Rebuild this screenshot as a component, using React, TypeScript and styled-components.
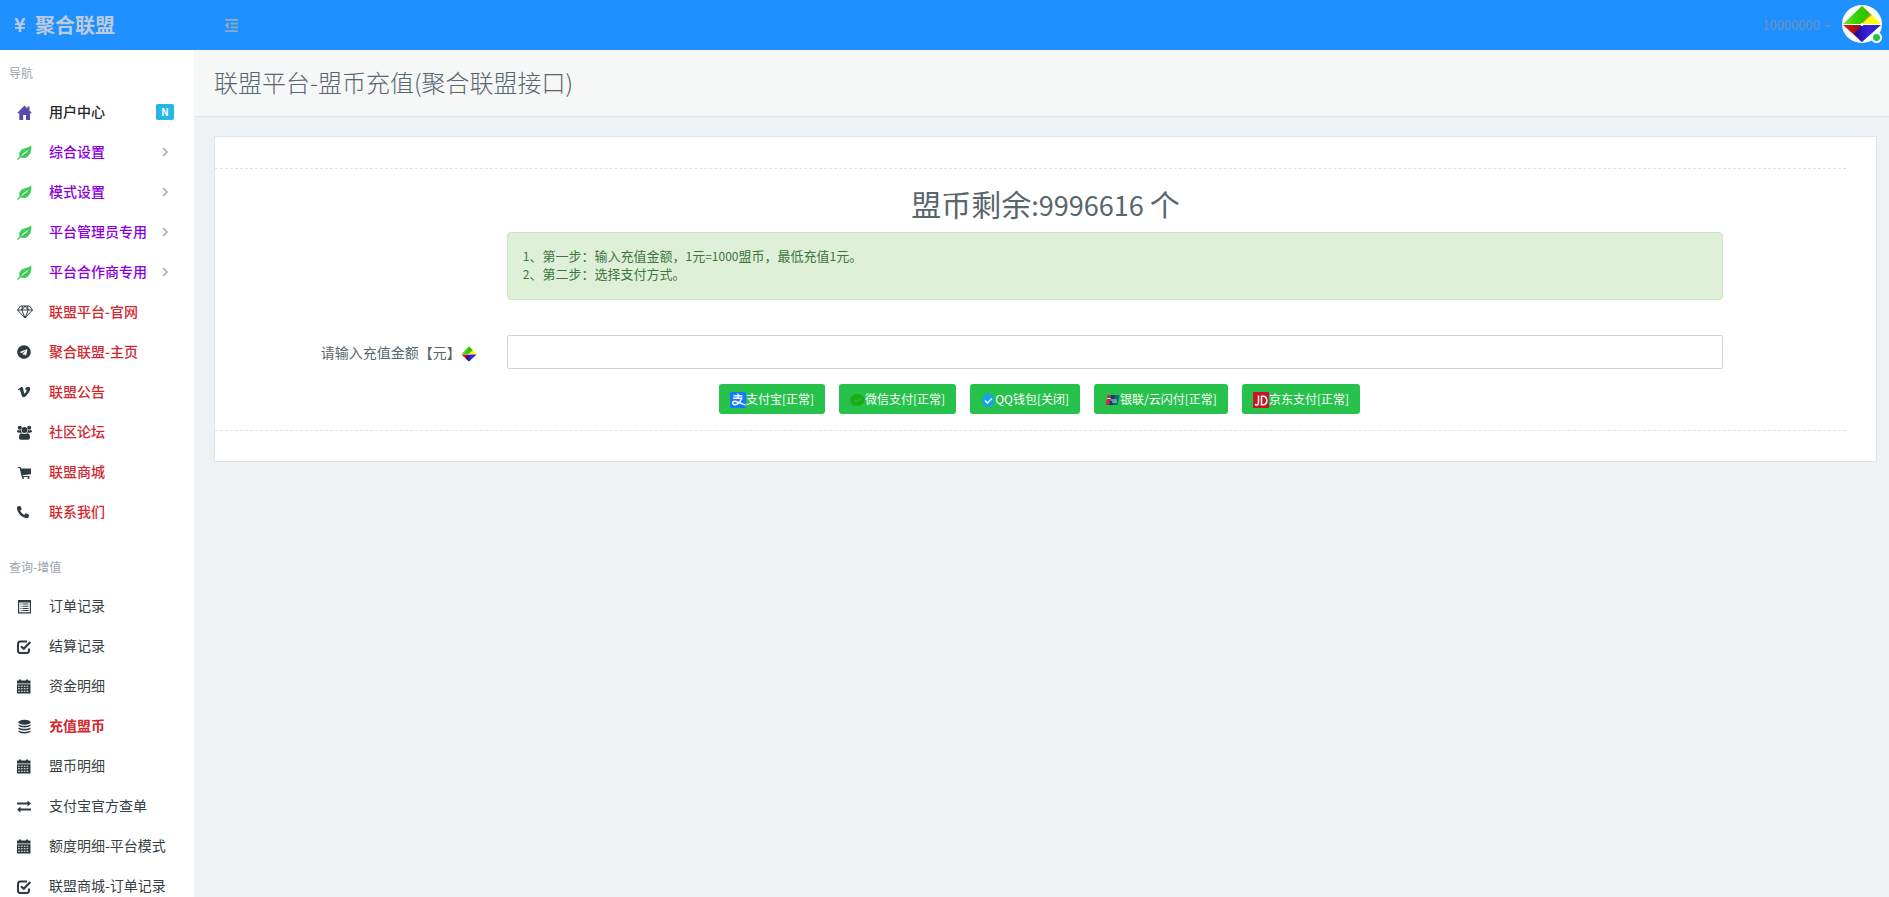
import React from "react";
import styled, { createGlobalStyle, css } from "styled-components";
import {
  FaOutdent,
  FaYenSign,
  FaTelegram,
  FaVimeoV,
  FaPhoneAlt,
} from "react-icons/fa";

const GlobalStyle = createGlobalStyle`
  *, *::before, *::after { box-sizing: border-box; }
  body {
    margin: 0;
    background: #eef2f4;
    color: #58666e;
    font-family: "Noto Sans CJK SC", "Noto Sans", sans-serif;
    font-size: 14px;
    line-height: 20px;
  }
  a { color: inherit; text-decoration: none; }
  h1, h2, p, ul { margin: 0; padding: 0; }
  svg { display: block; flex: none; }
`;

/* ---------- shell ---------- */

const Shell = styled.div`
  display: grid;
  grid-template: 50px minmax(0, 1fr) / 194px minmax(0, 1fr);
  height: 100vh;
`;

const Header = styled.header`
  grid-column: 1 / -1;
  display: flex;
  align-items: center;
  background: #1e90ff;
`;

const Brand = styled.a`
  display: flex;
  align-items: center;
  gap: 7px;
  width: 194px;
  padding-left: 12px;
  color: #bccbdb;
  font-size: 20px;
  font-weight: 700;
`;

const FoldButton = styled.button`
  display: flex;
  margin: 0 0 0 20px;
  padding: 10px;
  border: 0;
  background: none;
  color: #8ea9c6;
  font-size: 15px;
`;

const UserMenu = styled.button`
  display: flex;
  align-items: center;
  margin: 0 7px 2px auto;
  padding: 0;
  border: 0;
  background: none;
  color: #6a94c0;
  font: inherit;
  font-size: 13px;
`;

const UserName = styled.span`
  padding-top: 2px;
`;

const Caret = styled.i`
  margin: 4px 11px 0 5px;
  border: 3px solid transparent;
  border-top-color: currentColor;
  border-bottom-width: 0;
`;

const Avatar = styled.span`
  position: relative;
  display: block;
  width: 40px;
  height: 38px;
  border-radius: 50%;
  background: #fff;

  > svg { width: 100%; height: 100%; }
`;

const OnlineDot = styled.i`
  position: absolute;
  right: 0;
  bottom: 0;
  width: 11px;
  height: 11px;
  border: 2px solid #fff;
  border-radius: 50%;
  background: #27c24c;
`;

/* ---------- sidebar ---------- */

const Sidebar = styled.nav`
  background: #fff;
  overflow-y: auto;
  scrollbar-width: none;
`;

const NavGroup = styled.section`
  & + & { margin-top: 12px; }
`;

const NavTitle = styled.h2`
  padding: 14px 9px 10px;
  color: #98a6ad;
  font-size: 12px;
  font-weight: 400;
  line-height: 18px;
`;

const NavList = styled.ul`
  list-style: none;
`;

type Tone = "plain" | "dark" | "purple" | "red" | "strongRed";

const tones = {
  plain: css`color: #363f44; font-weight: 400;`,
  dark: css`color: #22282c; font-weight: 500;`,
  purple: css`color: #8a00e0; font-weight: 500;`,
  red: css`color: #d2282f; font-weight: 500;`,
  strongRed: css`color: #d2282f; font-weight: 700;`,
};

const NavLink = styled.a<{ $tone: Tone }>`
  display: flex;
  align-items: center;
  height: 40px;
  padding: 0 20px 0 17px;
  white-space: nowrap;
  ${(p) => tones[p.$tone]}
`;

const NavIcon = styled.span<{ $color?: string }>`
  display: flex;
  width: 16px;
  margin-right: 16px;
  color: ${(p) => p.$color || "#2e3a42"};
  font-size: 14px;
`;

const NavText = styled.span`
  flex: 1;
  padding-bottom: 2px;
`;

const Badge = styled.b`
  width: 18px;
  border-radius: 2px;
  background: #23b7e5;
  color: #fff;
  font-size: 10px;
  line-height: 16px;
  text-align: center;
`;

/* ---------- content ---------- */

const Main = styled.main`
  overflow: auto;
`;

const PageTitle = styled.h1`
  padding: 19px 20px 21px;
  border-bottom: 1px solid #dee5e7;
  background: #f6f8f8;
  color: #58666e;
  font-size: 24px;
  font-weight: 300;
  line-height: 26px;
`;

const Panel = styled.section`
  margin: 19px 12px 20px 20px;
  padding: 31px 0 30px;
  border: 1px solid #dee5e7;
  background: #fff;
`;

const Divider = styled.hr`
  height: 0;
  margin: 0 30px 0 0;
  border: 0;
  border-top: 1px dashed #dee5e7;
`;

const Balance = styled.h2`
  margin: 18px 0 11px;
  color: #58666e;
  font-size: 30px;
  font-weight: 400;
  line-height: 33px;
  text-align: center;

  span { font-size: 27px; }
`;

const FormRow = styled.div`
  display: grid;
  grid-template-columns: repeat(12, minmax(0, 1fr));
  align-items: center;
`;

const Field = styled.div`
  grid-column: 3 / span 9;
  padding: 0 15px;
`;

const Notice = styled.div`
  margin-bottom: 35px;
  padding: 14px 15px 16px;
  border: 1px solid #cbe6c0;
  border-radius: 4px;
  background: #dff0d8;
  color: #3c763d;
  font-size: 13px;
  line-height: 18px;

  span { font-size: 12px; }
`;

const AmountLabel = styled.label`
  grid-column: 1 / span 2;
  display: flex;
  justify-content: flex-end;
  align-items: center;
  padding-right: 15px;
  white-space: nowrap;

  svg { width: 16px; height: 16px; margin-top: 3px; }
`;

const AmountInput = styled.input`
  display: block;
  width: 100%;
  height: 34px;
  padding: 6px 12px;
  border: 1px solid #cfd4d8;
  border-radius: 2px;
  background: #fff;
  font: inherit;
`;

const PayButtons = styled.div`
  display: flex;
  justify-content: center;
  gap: 14px;
  padding: 15px 12px 16px 0;
`;

const PayButton = styled.button`
  display: flex;
  align-items: center;
  height: 30px;
  padding: 0 11px 1px;
  border: 0;
  border-radius: 3px;
  background: #27c24c;
  color: #fff;
  font: inherit;
  font-size: 12px;
  white-space: nowrap;

  svg { width: auto; height: 16px; margin-top: 3px; }
`;

/* ---------- drawings ---------- */

const DiamondMark = () => (
  <svg viewBox="0 0 40 38" preserveAspectRatio="none" aria-hidden="true">
    <defs>
      <linearGradient id="facetGreen"><stop offset="0" stopColor="#7be03c" /><stop offset=".5" stopColor="#2fd300" /><stop offset="1" stopColor="#35b900" /></linearGradient>
      <linearGradient id="facetRed"><stop offset="0" stopColor="#e01c10" /><stop offset="1" stopColor="#8d0d12" /></linearGradient>
      <linearGradient id="facetBlue"><stop offset="0" stopColor="#1d0a8c" /><stop offset=".5" stopColor="#3a1ee0" /><stop offset="1" stopColor="#3427a8" /></linearGradient>
    </defs>
    <path d="M20 1 39 19H20z" fill="#ffff00" />
    <path d="M20 1 30 10 24 15 20 19z" fill="#b9a529" />
    <path d="M20 1 28 9 19 19H1z" fill="url(#facetGreen)" />
    <path d="M1 20H20L20 37z" fill="url(#facetRed)" />
    <path d="M20 20H39L20 37 12 29z" fill="url(#facetBlue)" />
    <circle cx="20" cy="19.500" r="1.500" fill="#fff" />
  </svg>
);

const Glyph = ({ children }: { children: React.ReactNode }) => (
  <svg width="15" height="15" viewBox="0 0 15 15" fill="currentColor" aria-hidden="true">{children}</svg>
);

const HomeIcon = () => (
  <Glyph><path d="M7.500 .6 10.500 3.500V1.500h2v4l2.500 2.700H13V15H9V10H6.200V15H2.300V8.200H0z" /></Glyph>
);

const LeafIcon = () => (
  <Glyph>
    <path fillRule="evenodd" d="M14.300 .3C14.600 5 13.800 9 11 11.500 8.800 13.300 5.500 13.300 3.600 12.500L.9 15 0 14.200 2.600 11.300C1.500 8.200 3 5.500 6 4 9 2.700 12 2.700 14.300 .3zM11.600 4.500C9 6.800 6 7.800 4 11 6.500 9.500 9.500 8.300 11.600 4.500z" />
  </Glyph>
);

const DiamondIcon = () => (
  <svg width="16" height="14" viewBox="0 0 16 14" fill="none" stroke="currentColor" strokeLinejoin="round" aria-hidden="true">
    <path d="M3.500 1h9L15.500 5 8 13 .5 5zM.5 5h15M5.500 1 4.800 5 8 13 11.200 5 10.500 1M4.800 5 8 1 11.200 5" />
  </svg>
);

const UsersIcon = () => (
  <Glyph>
    <circle cx="2.800" cy="2.700" r="2" />
    <circle cx="12.200" cy="2.700" r="2" />
    <circle cx="7.500" cy="5" r="3" />
    <path d="M1.300 5C2.200 5.500 3 5.500 3.900 5.100 4 6.300 4.400 7 5 7.700H2C.8 7.700 0 7.200 0 6.500 0 5.800 .4 5 1.300 5zM13.700 5C12.800 5.500 12 5.500 11.100 5.100 11 6.300 10.600 7 10 7.700h3C14.200 7.700 15 7.200 15 6.500 15 5.800 14.600 5 13.700 5z" />
    <path d="M4.500 8.200C6.500 9.300 8.500 9.300 10.500 8.200 12.500 8.200 13 10.500 13 12.500 13 14 12.300 14.700 11 14.700H4C2.700 14.700 2 14 2 12.500 2 10.500 2.500 8.200 4.500 8.200z" />
  </Glyph>
);

const CartIcon = () => (
  <Glyph><path d="M.8 2H3.500l.6 1.500H14V9.300L5.500 10.200 5.800 11H12.500v1H4.800L2.600 3H.8z" /><circle cx="6" cy="13" r="1" /><circle cx="11.500" cy="13" r="1" /></Glyph>
);

const ListIcon = () => (
  <Glyph>
    <path fillRule="evenodd" d="M1 1h13v13.500H1zM2.200 3.500V13.300H12.800V3.500z" />
    <path d="M3.500 4.500h1v1h-1zM5.500 4.500h6v1h-6zM3.500 6.700h1v1h-1zM5.500 6.700h6v1h-6zM3.500 8.900h1v1h-1zM5.500 8.900h6v1h-6zM3.500 11.100h1v1h-1zM5.500 11.100h6v1h-6z" />
  </Glyph>
);

const CheckIcon = () => (
  <Glyph>
    <path d="M10 2.500H3.500Q1 2.500 1 5V11.500Q1 14 3.500 14H9.500Q12 14 12 11.500V9.500" fill="none" stroke="currentColor" strokeWidth="2" />
    <path d="M4 7.200 6.800 9.700 13.300 3" fill="none" stroke="currentColor" strokeWidth="2.200" />
  </Glyph>
);

const CalendarIcon = () => (
  <Glyph>
    <path d="M0 1.500h2V.5h2v1h5V.5h2v1h2.500V4.500H0z" />
    <path fillRule="evenodd" d="M0 5.300h13.500V14.500H0zM1.200 6.800v1h1.600v-1zM4 6.800v1h1.600v-1zM6.800 6.800v1h1.600v-1zM9.600 6.800v1h1.600v-1zM1.200 9.300v1h1.600v-1zM4 9.300v1h1.600v-1zM6.800 9.300v1h1.600v-1zM9.600 9.300v1h1.600v-1zM1.200 11.800v1h1.600v-1zM4 11.800v1h1.600v-1zM6.800 11.800v1h1.600v-1zM9.600 11.800v1h1.600v-1z" />
  </Glyph>
);

const CoinsIcon = () => (
  <Glyph>
    <ellipse cx="7.500" cy="3.200" rx="6" ry="2.500" />
    <path d="M1.500 5.200C4 7.200 11 7.200 13.500 5.200V6.500C12.500 9 2.500 9 1.500 6.500zM1.500 8.500C4 10.300 11 10.300 13.500 8.500V9.800C12.500 12 2.500 12 1.500 9.800zM1.500 11.600C4 13.400 11 13.400 13.500 11.600V12.600C12.500 15.200 2.500 15.200 1.500 12.600z" />
  </Glyph>
);

const TransferIcon = () => (
  <Glyph><path d="M0 4h10.500V2l3.500 3-3.500 3V6H0zM14 10H3.500V8L0 11l3.500 3V12H14z" transform="translate(0 -.5)" /></Glyph>
);

const ArrowIcon = () => (
  <svg width="12" height="10" viewBox="0 0 12 10" fill="none" stroke="#a2a8ac" strokeWidth="1.500" aria-hidden="true">
    <path d="M1 1 5 5 1 9" />
  </svg>
);

const AlipayLogo = () => (
  <svg viewBox="0 0 16 16" fill="none" stroke="#fff" strokeLinecap="round" aria-hidden="true">
    <rect width="16" height="16" rx="2" fill="#1677ff" stroke="none" />
    <path d="M4 3.800h8M8 2v4.300M3.500 6.300h8.300C10.500 9.500 8 12.700 4.600 12.700 2 12.700 2 9.200 5 9.200 8 9.200 11.500 12.400 15 12.800" strokeWidth="1.400" />
  </svg>
);

const WechatLogo = () => (
  <svg viewBox="0 0 15 16" aria-hidden="true">
    <path d="M7.500 2C3.200 2 .3 4.700 .3 8c0 2 1 3.600 2.500 4.600L2.400 14.500 4.700 13.400C9 15 14.700 12.300 14.700 8 14.700 4.700 11.700 2 7.500 2z" fill="#1aad19" />
    <path d="M4.500 8 6.500 9.800 11.500 6.500" fill="none" stroke="#35ba45" strokeWidth="1.200" />
  </svg>
);

const QQWalletLogo = () => (
  <svg viewBox="1 0 14 16" aria-hidden="true">
    <path d="M8 .5C10.500 3 13.500 3.500 14 8 14.300 12.500 11.500 15 8 15 4 15 2 12.500 2 9 2 4 5.500 3.500 8 .5z" fill="#12a5ee" />
    <path d="M5 8.500 7.300 11 12 6.500" fill="none" stroke="#fff" strokeWidth="1.400" />
  </svg>
);

const UnionPayLogo = () => (
  <svg viewBox="1 0 15 16" aria-hidden="true">
    <path d="M3.500 3H8L6 13H1.500z" fill="#d7263d" />
    <path d="M7 3h5l-2 10H5z" fill="#173a68" />
    <path d="M11 3h4.500l-2 10H9z" fill="#08706f" />
    <path d="M3 6.500h4M6.500 8h6M8 10h5" stroke="#c9dfec" strokeWidth="1.200" />
  </svg>
);

const JdLogo = () => (
  <svg viewBox="0 0 16 16" fill="none" stroke="#fff" strokeWidth="1.500" aria-hidden="true">
    <rect width="16" height="16" fill="#c81623" stroke="none" />
    <path d="M2 12.500Q5.500 14 5.500 10.500V3.500M8.500 4.200V12.800H10Q13.800 12.800 13.800 8.500 13.800 4.200 10 4.200z" />
  </svg>
);

/* ---------- data ---------- */

interface Entry {
  text: string;
  icon: React.ReactNode;
  tone?: Tone;
  color?: string;
  end?: React.ReactNode;
}

const folder = (text: string): Entry => ({
  text,
  icon: <LeafIcon />,
  tone: "purple",
  color: "#3fca5c",
  end: <ArrowIcon />,
});

const groups: { title: string; entries: Entry[] }[] = [
  {
    title: "导航",
    entries: [
      { text: "用户中心", icon: <HomeIcon />, tone: "dark", color: "#5a4aa5", end: <Badge>N</Badge> },
      folder("综合设置"),
      folder("模式设置"),
      folder("平台管理员专用"),
      folder("平台合作商专用"),
      { text: "联盟平台-官网", icon: <DiamondIcon />, tone: "red" },
      { text: "聚合联盟-主页", icon: <FaTelegram />, tone: "red" },
      { text: "联盟公告", icon: <FaVimeoV />, tone: "red" },
      { text: "社区论坛", icon: <UsersIcon />, tone: "red" },
      { text: "联盟商城", icon: <CartIcon />, tone: "red" },
      { text: "联系我们", icon: <FaPhoneAlt size={12} />, tone: "red" },
    ],
  },
  {
    title: "查询-增值",
    entries: [
      { text: "订单记录", icon: <ListIcon /> },
      { text: "结算记录", icon: <CheckIcon /> },
      { text: "资金明细", icon: <CalendarIcon /> },
      { text: "充值盟币", icon: <CoinsIcon />, tone: "strongRed" },
      { text: "盟币明细", icon: <CalendarIcon /> },
      { text: "支付宝官方查单", icon: <TransferIcon /> },
      { text: "额度明细-平台模式", icon: <CalendarIcon /> },
      { text: "联盟商城-订单记录", icon: <CheckIcon /> },
    ],
  },
];

const payments = [
  { text: "支付宝[正常]", logo: <AlipayLogo /> },
  { text: "微信支付[正常]", logo: <WechatLogo /> },
  { text: "QQ钱包[关闭]", logo: <QQWalletLogo /> },
  { text: "银联/云闪付[正常]", logo: <UnionPayLogo /> },
  { text: "京东支付[正常]", logo: <JdLogo /> },
];

export default function App() {
  return (
    <Shell>
      <GlobalStyle />
      <Header>
        <Brand href="#">
          <FaYenSign size={16} />
          聚合联盟
        </Brand>
        <FoldButton type="button" aria-label="折叠菜单">
          <FaOutdent />
        </FoldButton>
        <UserMenu type="button">
          <UserName>10000000</UserName>
          <Caret />
          <Avatar>
            <DiamondMark />
            <OnlineDot />
          </Avatar>
        </UserMenu>
      </Header>

      <Sidebar>
        {groups.map((group) => (
          <NavGroup key={group.title}>
            <NavTitle>{group.title}</NavTitle>
            <NavList>
              {group.entries.map((entry) => (
                <li key={entry.text}>
                  <NavLink href="#" $tone={entry.tone || "plain"}>
                    <NavIcon $color={entry.color}>{entry.icon}</NavIcon>
                    <NavText>{entry.text}</NavText>
                    {entry.end}
                  </NavLink>
                </li>
              ))}
            </NavList>
          </NavGroup>
        ))}
      </Sidebar>

      <Main>
        <PageTitle>联盟平台-盟币充值(聚合联盟接口)</PageTitle>
        <Panel>
          <Divider />
          <Balance>
            盟币剩余<span>:9996616 </span>个
          </Balance>
          <form onSubmit={(e) => e.preventDefault()}>
            <FormRow>
              <Field>
                <Notice>
                  <p><span>1</span>、第一步：输入充值金额，<span>1</span>元<span>=1000</span>盟币，最低充值<span>1</span>元。</p>
                  <p><span>2</span>、第二步：选择支付方式。</p>
                </Notice>
              </Field>
            </FormRow>
            <FormRow>
              <AmountLabel htmlFor="amount">
                请输入充值金额【元】
                <DiamondMark />
              </AmountLabel>
              <Field>
                <AmountInput id="amount" type="text" />
              </Field>
            </FormRow>
            <PayButtons>
              {payments.map((p) => (
                <PayButton key={p.text} type="submit">
                  {p.logo}
                  {p.text}
                </PayButton>
              ))}
            </PayButtons>
          </form>
          <Divider />
        </Panel>
      </Main>
    </Shell>
  );
}
